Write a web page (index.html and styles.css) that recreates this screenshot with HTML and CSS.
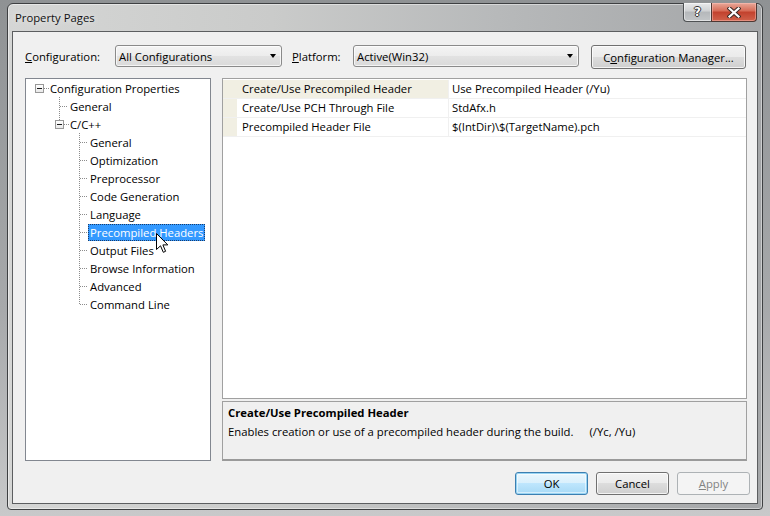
FILE: index.html
```html
<!DOCTYPE html>
<html>
<head>
<meta charset="utf-8">
<title>Property Pages</title>
<link rel="stylesheet" href="styles.css">
</head>
<body>
<div class="window">
  <div class="titlebar">
    <span class="title">Property Pages</span>
    <div class="caption-btns">
      <div class="cbtn help"><span>?</span></div>
      <div class="cbtn close">
        <svg width="14" height="11" viewBox="0 0 14 11">
          <path d="M2.5 1.5 L11.5 9.5 M11.5 1.5 L2.5 9.5" stroke="#3a2a26" stroke-width="4.2" stroke-linecap="square" fill="none"/>
          <path d="M2.5 1.5 L11.5 9.5 M11.5 1.5 L2.5 9.5" stroke="#ffffff" stroke-width="2.2" stroke-linecap="square" fill="none"/>
        </svg>
      </div>
    </div>
  </div>
  <div class="client">
    <div class="config-row">
      <span class="lbl lbl-config"><u>C</u>onfiguration:</span>
      <div class="combo combo-config"><span class="combo-text">All Configurations</span><i class="arrow"></i></div>
      <span class="lbl lbl-platform"><u>P</u>latform:</span>
      <div class="combo combo-platform"><span class="combo-text">Active(Win32)</span><i class="arrow"></i></div>
      <div class="btn btn-mgr">C<u>o</u>nfiguration Manager...</div>
    </div>
    <div class="main">
      <div class="tree">
        <div class="node l0"><span class="twig root exp"><b class="box"></b></span><span class="label">Configuration Properties</span></div>
        <div class="node l1"><span class="twig"></span><span class="label">General</span></div>
        <div class="node l1"><span class="twig last exp"><b class="box"></b></span><span class="label">C/C++</span></div>
        <div class="node l2"><span class="twig"></span><span class="label">General</span></div>
        <div class="node l2"><span class="twig"></span><span class="label">Optimization</span></div>
        <div class="node l2"><span class="twig"></span><span class="label">Preprocessor</span></div>
        <div class="node l2"><span class="twig"></span><span class="label">Code Generation</span></div>
        <div class="node l2"><span class="twig"></span><span class="label">Language</span></div>
        <div class="node l2"><span class="twig"></span><span class="label selected">Precompiled Headers</span></div>
        <div class="node l2"><span class="twig"></span><span class="label">Output Files</span></div>
        <div class="node l2"><span class="twig"></span><span class="label">Browse Information</span></div>
        <div class="node l2"><span class="twig"></span><span class="label">Advanced</span></div>
        <div class="node l2"><span class="twig last"></span><span class="label">Command Line</span></div>
      </div>
      <div class="right">
        <div class="grid">
          <div class="prop sel"><div class="gut"></div><div class="name">Create/Use Precompiled Header</div><div class="val">Use Precompiled Header (/Yu)</div></div>
          <div class="prop"><div class="gut"></div><div class="name">Create/Use PCH Through File</div><div class="val">StdAfx.h</div></div>
          <div class="prop"><div class="gut"></div><div class="name">Precompiled Header File</div><div class="val">$(IntDir)\$(TargetName).pch</div></div>
        </div>
        <div class="desc">
          <div class="desc-title">Create/Use Precompiled Header</div>
          <div class="desc-text">Enables creation or use of a precompiled header during the build.<span class="desc-switch">(/Yc, /Yu)</span></div>
        </div>
      </div>
    </div>
    <div class="buttons">
      <div class="btn btn-dlg btn-default">OK</div>
      <div class="btn btn-dlg">Cancel</div>
      <div class="btn btn-dlg btn-disabled"><u>A</u>pply</div>
    </div>
  </div>
</div>
<svg class="cursor" width="13" height="21" viewBox="0 0 13 21">
  <path d="M0.5 0.5 L0.5 16.5 L4.5 12.8 L7.3 19.3 L9.6 18.3 L6.9 11.9 L11.8 11.9 Z" fill="#ffffff" stroke="#000000" stroke-width="1" stroke-linejoin="miter"/>
</svg>
</body>
</html>
```
FILE: styles.css
```css
* { box-sizing: border-box; }
html, body { margin: 0; padding: 0; }
body {
  width: 770px;
  height: 516px;
  overflow: hidden;
  position: relative;
  background: linear-gradient(to bottom, #8f9294 0%, #a7a9ab 60%, #c8c9ca 100%);
  font-family: "Open Sans", "Noto Sans", sans-serif;
  font-size: 11.3px;
  color: #000;
}
u { text-decoration: underline; text-underline-offset: 1px; }

.window {
  margin: 3px 0 0 7px;
  width: 756px;
  height: 507px;
  border: 1px solid #3e4042;
  border-radius: 6px 6px 4px 4px;
  background: linear-gradient(to right, #d5d6d5 0%, #cacbca 35%, #b7b9ba 65%, #a4a6a8 100%);
  box-shadow: inset 0 0 0 1px rgba(255,255,255,0.45);
  display: flex;
  flex-direction: column;
}

.titlebar {
  flex: none;
  height: 27px;
  display: flex;
  align-items: flex-start;
  padding: 0 5px 0 7px;
}
.title {
  line-height: 27px;
  color: #111;
  text-shadow: 0 0 6px rgba(255,255,255,0.8);
}
.caption-btns {
  margin-left: auto;
  display: flex;
  height: 19px;
  margin-top: -1px;
}
.cbtn {
  height: 19px;
  display: flex;
  align-items: center;
  justify-content: center;
  border: 1px solid #4f5254;
  border-top: none;
}
.help {
  width: 28px;
  border-right: none;
  border-radius: 0 0 0 4px;
  background: linear-gradient(to bottom, #e9eaeb 0%, #cfd1d3 45%, #b5b8bb 50%, #c3c6c8 100%);
  box-shadow: inset 0 0 0 1px rgba(255,255,255,0.5);
}
.help span {
  color: #fff;
  font-family: "DejaVu Sans", sans-serif;
  font-weight: bold;
  font-size: 12px;
  line-height: 1;
  text-shadow: 1px 0 0 #333, -1px 0 0 #333, 0 1px 0 #333, 0 -1px 0 #333;
}
.close {
  width: 46px;
  border-radius: 0 0 4px 0;
  border-color: #4e3833;
  background: linear-gradient(to bottom, #e9a899 0%, #d66a55 45%, #c2412d 50%, #d0624b 100%);
  box-shadow: inset 0 0 0 1px rgba(255,200,190,0.45);
}

.client {
  flex: 1;
  margin: 0 4px 5px 4px;
  border: 1px solid #5c5e60;
  background: #f0f0f0;
  padding: 13px 10px 0 12px;
  display: flex;
  flex-direction: column;
}

.config-row {
  display: flex;
  align-items: flex-start;
  height: 24px;
  flex: none;
}
.lbl { line-height: 22px; padding-top: 1px; }
.lbl-config { width: 90px; }
.lbl-platform { width: 61px; margin-left: 10px; }
.combo {
  position: relative;
  height: 22px;
  border: 1px solid #8a8a8a;
  border-radius: 3px;
  background: linear-gradient(to bottom, #f4f4f4 0%, #ececec 50%, #e2e2e2 51%, #dadada 100%);
  box-shadow: inset 0 0 0 1px rgba(255,255,255,0.7);
  display: flex;
  align-items: center;
  padding-left: 3px;
}
.combo-config { width: 167px; }
.combo-platform { width: 226px; }
.combo-text { line-height: 20px; padding-top: 1px; }
.arrow {
  position: absolute;
  right: 5px;
  top: 8px;
  width: 0;
  height: 0;
  border-left: 3.5px solid transparent;
  border-right: 3.5px solid transparent;
  border-top: 4px solid #000;
}

.btn {
  border: 1px solid #707070;
  border-radius: 3px;
  background: linear-gradient(to bottom, #f2f2f2 0%, #ebebeb 49%, #dddddd 50%, #cfcfcf 100%);
  box-shadow: inset 0 0 0 1px rgba(255,255,255,0.75);
  display: flex;
  align-items: center;
  justify-content: center;
}
.btn-mgr { width: 155px; height: 24px; margin-left: 12px; }

.main {
  flex: none;
  margin-top: 9px;
  height: 383px;
  display: flex;
  gap: 11px;
}

.tree {
  width: 186px;
  flex: none;
  border: 1px solid #828790;
  background: #fff;
  padding: 0 0 0 3px;
}
.node {
  height: 18px;
  display: flex;
  align-items: center;
}
.l0 { padding-left: 0; }
.l1 { padding-left: 20px; }
.l2 { padding-left: 40px; }
.twig {
  position: relative;
  flex: none;
  width: 19px;
  height: 18px;
}
.twig::before {
  content: "";
  position: absolute;
  left: 10px;
  top: 0;
  width: 1px;
  height: 18px;
  background: repeating-linear-gradient(to bottom, #8c8c8c 0 1px, transparent 1px 2px);
}
.twig.last::before { height: 9px; }
.twig.root::before { display: none; }
.twig::after {
  content: "";
  position: absolute;
  left: 11px;
  top: 9px;
  width: 8px;
  height: 1px;
  background: repeating-linear-gradient(to right, #8c8c8c 0 1px, transparent 1px 2px);
}
.twig.exp::after { left: 15px; width: 6px; }
.box {
  position: absolute;
  left: 6px;
  top: 5px;
  width: 9px;
  height: 9px;
  border: 1px solid #989898;
  background: linear-gradient(to bottom, #ffffff, #e9e9e9);
  z-index: 1;
}
.box::after {
  content: "";
  position: absolute;
  left: 1px;
  top: 3px;
  width: 5px;
  height: 1px;
  background: #1a1a1a;
}
.label {
  padding: 0 2px;
  height: 17px;
  line-height: 17px;
  white-space: nowrap;
}
.label.selected {
  background: #3399ff;
  color: #fff;
  outline: 1px dotted #1a3c6a;
  outline-offset: -1px;
}

.right {
  flex: 1;
  display: flex;
  flex-direction: column;
}
.grid {
  flex: 1;
  border: 1px solid #a0a0a0;
  background: #fff;
  padding-top: 1px;
}
.prop {
  height: 19px;
  display: flex;
  border-bottom: 1px solid #f0f0f0;
}
.gut {
  width: 14px;
  flex: none;
  background: #f1efe3;
}
.name {
  width: 211px;
  flex: none;
  padding-left: 5px;
  line-height: 18px;
  white-space: nowrap;
}
.prop.sel .name { background: #f1efe3; }
.val {
  flex: 1;
  border-left: 1px solid #f0f0f0;
  padding-left: 3px;
  line-height: 18px;
  white-space: nowrap;
}

.desc {
  flex: none;
  height: 60px;
  margin-top: 2px;
  border: 1px solid #a0a0a0;
  border-bottom: 2px solid #9a9a9a;
  background: #f0f0f0;
  padding: 1px 0 0 5px;
}
.desc-title { font-weight: bold; line-height: 19px; }
.desc-text { line-height: 19px; white-space: nowrap; }
.desc-switch { margin-left: 16px; }

.buttons {
  flex: none;
  margin-top: 11px;
  margin-right: -3px;
  display: flex;
  justify-content: flex-end;
  gap: 8px;
}
.btn-dlg { width: 73px; height: 23px; }
.btn-default {
  border-color: #3c7fb1;
  background: linear-gradient(to bottom, #eaf6fd 0%, #d9f0fc 49%, #bee6fd 50%, #a7d9f5 100%);
  box-shadow: inset 0 0 0 1px #98d4f3, inset 0 0 0 2px rgba(255,255,255,0.5);
}
.btn-disabled {
  border-color: #adb2b5;
  background: #f4f4f4;
  box-shadow: none;
  color: #838383;
}

.cursor {
  position: absolute;
  left: 156px;
  top: 233px;
}
```
